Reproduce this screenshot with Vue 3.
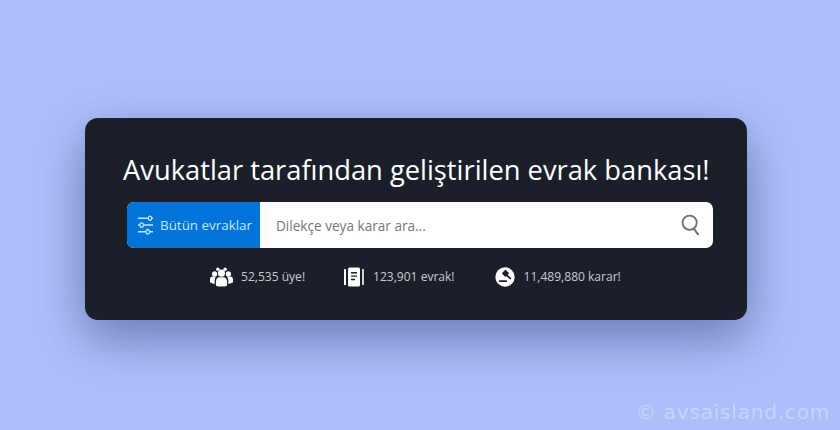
<template>
  <div class="page">
    <section class="card">
      <h1 class="headline">Avukatlar tarafından geliştirilen evrak bankası!</h1>

      <form class="search" @submit.prevent>
        <button type="button" class="filter">
          <svg class="filter-icon" viewBox="0 0 18 18" preserveAspectRatio="none" fill="none" stroke="currentColor" stroke-width="1.100">
            <path d="M1 3.500h11M15.500 3.500H17M1 9h2M7 9h10M1 14.500h8.500M13 14.500h4" />
            <circle cx="13.800" cy="3.500" r="1.700" />
            <circle cx="5" cy="9" r="1.800" />
            <circle cx="11.300" cy="14.500" r="1.800" />
          </svg>
          Bütün evraklar
        </button>
        <div class="field">
          <span class="placeholder">Dilekçe veya karar ara...</span>
          <svg class="search-icon" viewBox="0 0 22 24" fill="none" stroke="#6f6f6f" stroke-width="2" stroke-linecap="round">
            <circle cx="9.500" cy="9.500" r="7.800" />
            <path d="M14.200 16.200l4.600 6" stroke-width="2.200" />
          </svg>
        </div>
      </form>

      <ul class="stats">
        <li v-for="s in stats" :key="s.label" class="stat" :class="s.kind">
          <svg v-if="s.kind === 'users'" class="stat-icon" viewBox="0 0 24 20" fill="#fff">
            <circle cx="12" cy="6" r="3.700" />
            <path d="M6.200 19v-4.400c0-2.800 1.900-4.400 3.500-4.400h4.600c1.600 0 3.500 1.600 3.500 4.400V19c-3.400 1.300-8.200 1.300-11.600 0z" />
            <circle cx="4.800" cy="6.800" r="2.700" />
            <circle cx="19.200" cy="6.800" r="2.700" />
            <circle cx="8.200" cy="2" r="1.800" />
            <circle cx="15.800" cy="2" r="1.800" />
            <path d="M0 15.500v-3c0-1.900 1.300-2.900 2.600-2.900h3.600c-.9 1.100-1.300 2.700-1.300 4.600v3C3.200 17 1.200 16.400 0 15.500zM24 15.500v-3c0-1.900-1.300-2.900-2.600-2.900h-3.600c.9 1.100 1.300 2.700 1.300 4.600v3c1.700-.2 3.700-.8 4.900-1.700z" />
          </svg>
          <svg v-else-if="s.kind === 'docs'" class="stat-icon" viewBox="0 0 22 20" fill="#fff">
            <path fill-rule="evenodd" d="M6.500.5h9A1.500 1.500 0 0 1 17 2v16a1.500 1.500 0 0 1-1.500 1.500h-9A1.500 1.500 0 0 1 5 18V2A1.500 1.500 0 0 1 6.500.5zM8 5v1.400h6V5zm0 3.400v1.400h6V8.400zm0 3.400v1.400h4v-1.400z" />
            <rect x="1" y="2" width="2" height="16" rx=".5" />
            <rect x="19.200" y="2" width="1.600" height="16" rx=".5" />
          </svg>
          <svg v-else class="stat-icon" viewBox="0 0 20 20">
            <circle cx="10" cy="10" r="9.700" fill="#fff" />
            <g fill="#1a1f29">
              <rect x="7.800" y="3.600" width="5.200" height="5.400" rx=".6" transform="rotate(45 10.400 6.300)" />
              <path d="M10.800 8.800l1.300-1.300 4.300 3.800-1.200 1.200z" />
              <rect x="4" y="13.200" width="8" height="1.800" rx=".5" />
            </g>
          </svg>
          <span>{{ s.label }}</span>
        </li>
      </ul>
    </section>

    <span class="watermark">© avsaisland.com</span>
  </div>
</template>

<script setup>
const stats = [
  { kind: "users", label: "52,535 üye!" },
  { kind: "docs", label: "123,901 evrak!" },
  { kind: "gavel", label: "11,489,880 karar!" }
];
</script>

<style>
html,
body {
  margin: 0;
  background: #adbffa;
}
</style>

<style scoped>
.page {
  position: relative;
  box-sizing: border-box;
  width: 840px;
  height: 430px;
  padding: 118px 93px 110px 85px;
  overflow: hidden;
  background: #adbffa;
  font-family: "Open Sans", "Noto Sans", sans-serif;
}

.card {
  box-sizing: border-box;
  height: 202px;
  padding: 33px 34px 0 42px;
  border-radius: 13px;
  background: #1a1f29;
  box-shadow: 0 18px 50px rgba(50, 62, 120, 0.55);
}

.headline {
  margin: 0 0 14px -4px;
  color: #fff;
  font-size: 27.300px;
  font-weight: 400;
  line-height: 37px;
  white-space: nowrap;
}

/* search bar */
.search {
  display: flex;
  height: 46px;
  border-radius: 7px;
  overflow: hidden;
  background: #fff;
}
.filter {
  display: flex;
  align-items: center;
  gap: 6px;
  flex: 0 0 133px;
  box-sizing: border-box;
  padding: 0 0 0 10px;
  border: 0;
  background: #0074d9;
  color: #c8e4fb;
  font: inherit;
  font-size: 13.400px;
  white-space: nowrap;
}
.filter-icon {
  width: 17px;
  height: 22px;
  flex: none;
}
.field {
  display: flex;
  flex: 1;
  align-items: center;
  justify-content: space-between;
  padding: 0 12px 0 16px;
}
.placeholder {
  color: #777;
  font-size: 13.600px;
}
.search-icon {
  width: 20px;
  height: 24px;
}

/* counters */
.stats {
  display: flex;
  gap: 38px;
  margin: 19px 0 0;
  padding: 0 0 0 83px;
  list-style: none;
}
.stat {
  display: flex;
  align-items: center;
  gap: 8px;
  color: #c9cbd0;
  font-size: 12.050px;
  line-height: 20px;
  white-space: nowrap;
}
.stat-icon {
  display: block;
  width: 23px;
  height: 20px;
  flex: none;
}
.stat.docs .stat-icon {
  width: 22px;
}
.stat.gavel {
  gap: 9px;
  margin-left: 2px;
}
.stat.gavel .stat-icon {
  width: 20px;
}

.watermark {
  position: absolute;
  right: 10px;
  bottom: 6px;
  color: #c5d4fc;
  font-family: "DejaVu Sans", "Noto Sans", sans-serif;
  font-size: 20px;
  letter-spacing: 0.800px;
}
</style>
